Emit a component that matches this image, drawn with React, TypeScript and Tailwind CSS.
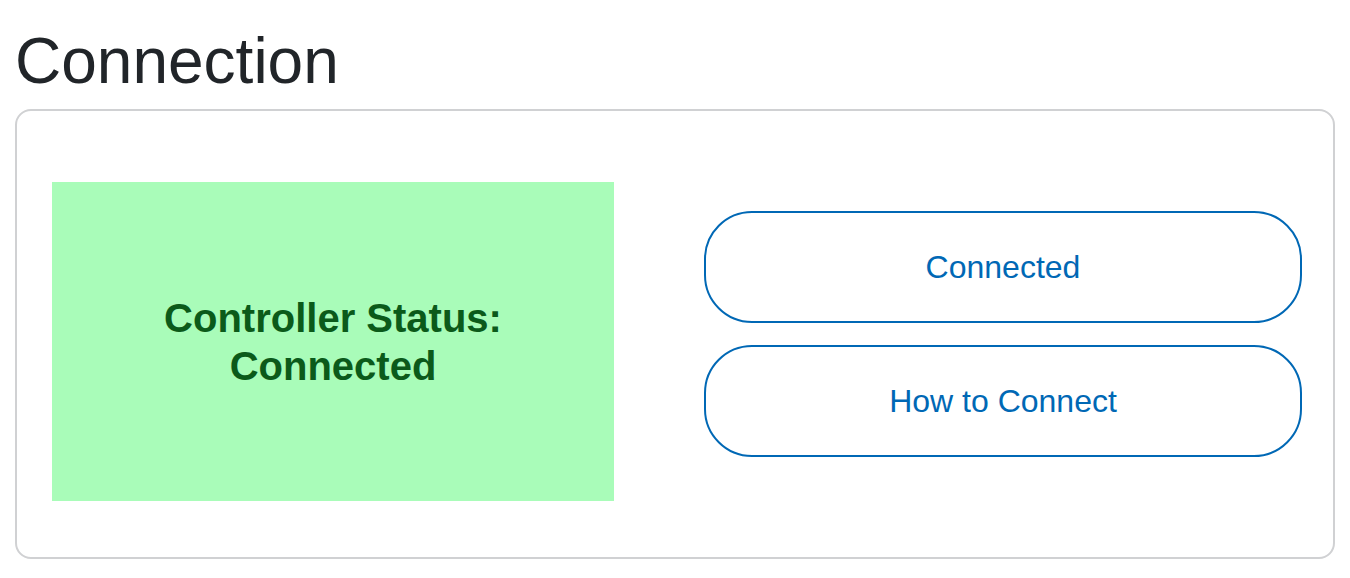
export default function App() {
  return (
    <div className="min-h-screen bg-white px-[15px] pt-[23px]" style={{ fontFamily: '"Liberation Sans", Arial, sans-serif' }}>
      <h2 className="mb-[9px] text-[64px] leading-[1.2] font-normal text-[#212529]">Connection</h2>
      <div className="flex items-start rounded-[16px] border-2 border-[#d0d1d3] pt-[71px] pb-[56px] pl-[35px]">
        <div className="flex h-[319px] w-[562px] items-center justify-center bg-[#a9fcb9] pt-[2px] text-center text-[40px] leading-[48px] font-bold text-[#0b5a1a]">
          <div>
            Controller Status:
            <br />
            Connected
          </div>
        </div>
        <div className="mt-[29px] ml-[90px] flex w-[598px] flex-col gap-[22px]">
          <button className="flex h-[112px] items-center justify-center rounded-[48px] border-2 border-[#0068b5] bg-white text-[32px] text-[#0068b5]">
            Connected
          </button>
          <button className="flex h-[112px] items-center justify-center rounded-[48px] border-2 border-[#0068b5] bg-white text-[32px] text-[#0068b5]">
            How to Connect
          </button>
        </div>
      </div>
    </div>
  );
}
